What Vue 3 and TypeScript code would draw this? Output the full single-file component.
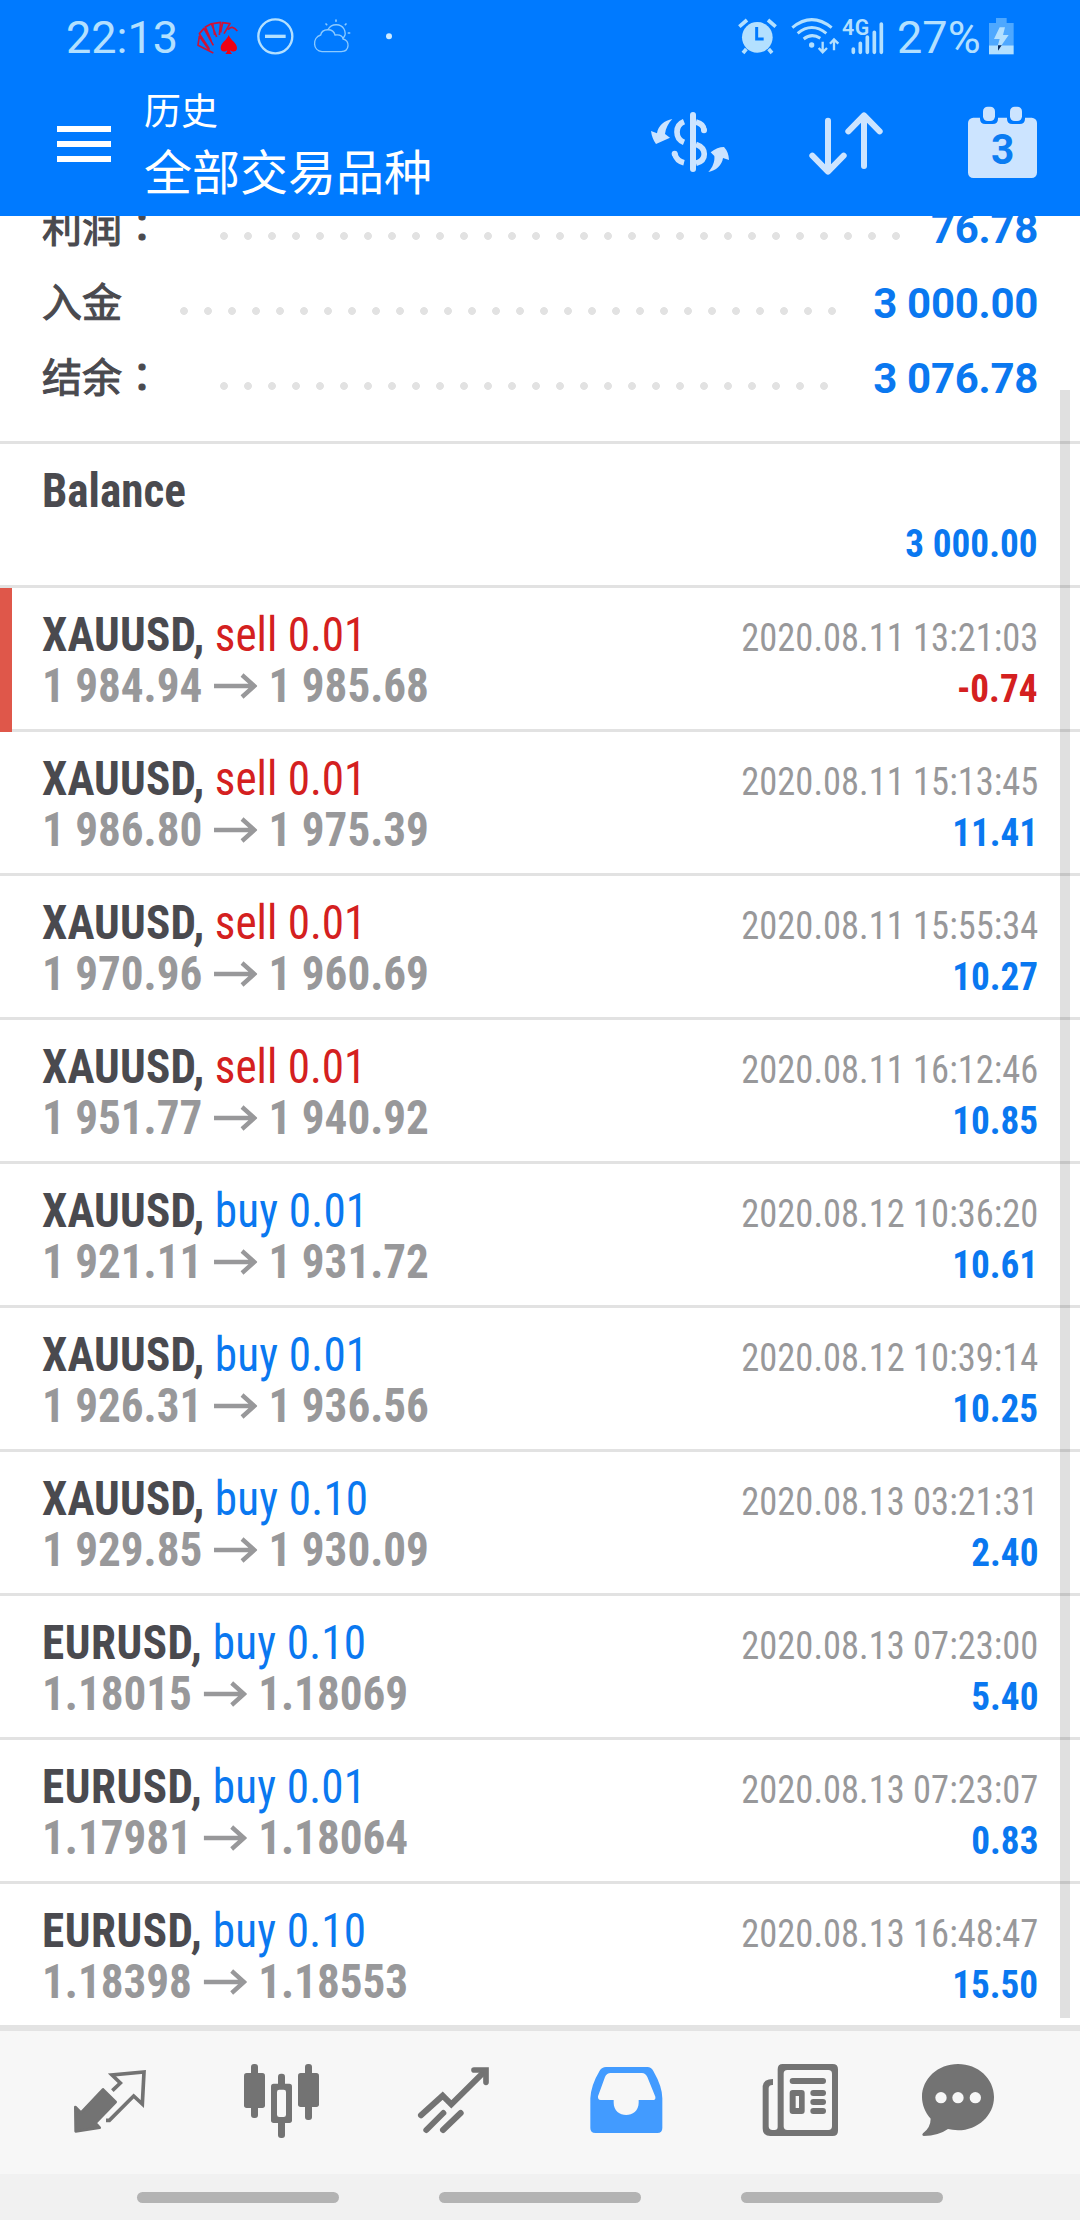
<script setup lang="ts">
interface SummaryLine { label: string; colon: boolean; dots: number; start: number; value: string }
interface Deal {
  symbol: string
  side: 'buy' | 'sell'
  volume: string
  open: string
  close: string
  time: string
  profit: string
}

const summary: SummaryLine[] = [
  { label: '利润', colon: true, dots: 29, start: 170, value: '76.78' },
  { label: '入金', colon: false, dots: 28, start: 130, value: '3 000.00' },
  { label: '结余', colon: true, dots: 26, start: 170, value: '3 076.78' },
]

const deals: Deal[] = [
  { symbol: 'XAUUSD', side: 'sell', volume: '0.01', open: '1 984.94', close: '1 985.68', time: '2020.08.11 13:21:03', profit: '-0.74' },
  { symbol: 'XAUUSD', side: 'sell', volume: '0.01', open: '1 986.80', close: '1 975.39', time: '2020.08.11 15:13:45', profit: '11.41' },
  { symbol: 'XAUUSD', side: 'sell', volume: '0.01', open: '1 970.96', close: '1 960.69', time: '2020.08.11 15:55:34', profit: '10.27' },
  { symbol: 'XAUUSD', side: 'sell', volume: '0.01', open: '1 951.77', close: '1 940.92', time: '2020.08.11 16:12:46', profit: '10.85' },
  { symbol: 'XAUUSD', side: 'buy', volume: '0.01', open: '1 921.11', close: '1 931.72', time: '2020.08.12 10:36:20', profit: '10.61' },
  { symbol: 'XAUUSD', side: 'buy', volume: '0.01', open: '1 926.31', close: '1 936.56', time: '2020.08.12 10:39:14', profit: '10.25' },
  { symbol: 'XAUUSD', side: 'buy', volume: '0.10', open: '1 929.85', close: '1 930.09', time: '2020.08.13 03:21:31', profit: '2.40' },
  { symbol: 'EURUSD', side: 'buy', volume: '0.10', open: '1.18015', close: '1.18069', time: '2020.08.13 07:23:00', profit: '5.40' },
  { symbol: 'EURUSD', side: 'buy', volume: '0.01', open: '1.17981', close: '1.18064', time: '2020.08.13 07:23:07', profit: '0.83' },
  { symbol: 'EURUSD', side: 'buy', volume: '0.10', open: '1.18398', close: '1.18553', time: '2020.08.13 16:48:47', profit: '15.50' },
]
</script>

<template>
  <div class="screen">
    <header class="top">
      <div class="status">
        <span class="clock">22:13</span>
        <svg class="status-left" viewBox="585 50 600 120" width="200" height="40" fill="none">
          <g stroke="#cc1238" stroke-width="5" stroke-linejoin="round">
            <path d="M640 158 L594 135 L598 108 L628 150 M628 146 L598 100 L612 84 L640 135 M634 122 L616 80 L634 70 L650 110 M644 104 L638 70 L662 66 L658 104 M662 96 L668 67 L690 70 L672 100 M684 88 Q696 72 712 92" />
          </g>
          <path fill="#f00014" d="M686 104 C692 120 711 128 711 143 C711 155 697 157 690 149 Q691 157 696 161 H676 Q681 157 682 149 C675 157 662 155 662 143 C662 128 680 120 686 104Z" />
          <circle cx="826" cy="108" r="51" stroke="#b3e0ff" stroke-width="7" />
          <path stroke="#b3e0ff" stroke-width="10" d="M795 108 H857" />
          <g stroke="#8ccaff" stroke-width="4" stroke-linecap="round">
            <path d="M966 154 C938 152 936 112 962 104 C966 84 1000 82 1005 104 C1022 102 1028 108 1029 116 C1050 120 1050 152 1024 154 Z" />
            <path d="M985 86 C994 70 1022 68 1032 86 C1038 97 1036 106 1030 113" />
            <path stroke-width="5" d="M1008 59 V63 M978 71 l2 2 M1038 71 l-2 2 M1045 98 h4" />
          </g>
          <circle cx="1167" cy="108" r="9" fill="#cdeaff" />
        </svg>
        <span class="grow" />
        <svg class="status-right" viewBox="290 50 442 120" width="147.33" height="40" fill="none">
          <g stroke="#b3e0ff">
            <path stroke-width="11" d="M297 79 L320 59 M406 79 L383 59 M318 146 L308 158 M385 146 L395 158" />
            <circle cx="351" cy="111" r="46" fill="#b3e0ff" stroke="none" />
            <path stroke="#007aff" stroke-width="9" d="M349 80 V116 H370" />
            <path stroke-width="9" d="M456 82 Q514 34 574 82 M472 99 Q514 64 558 99 M490 116 Q514 97 540 114" />
            <circle cx="514" cy="134" r="8" fill="#b3e0ff" stroke="none" />
            <path stroke-width="7" d="M547 124 V154 M535 143 L547 156 L560 143 M581 150 V118 M569 130 L581 117 L594 130" />
            <path stroke-width="11" stroke-linecap="round" d="M639 146 V156 M660 129 V156 M681 110 V156 M702 96 V156 M723 71 V156" />
          </g>
          <text x="605" y="104" font-family="Roboto" font-weight="600" font-size="64" fill="#b3e0ff" textLength="82">4G</text>
        </svg>
        <span class="percent">27%</span>
        <svg class="battery" viewBox="1046 50 74 114" width="24.67" height="38">
          <path fill="#4ea8ff" d="M1067 53 h32 v15 h21 v67 h-74 v-67 h21z" />
          <path fill="#b3e0ff" d="M1046 135 h74 v27 h-74z" />
          <path fill="#b3e0ff" d="M1078 81 H1094 L1088 104 H1105 L1082 137 H1072 L1078 116 H1061Z" />
          <path fill="#0a2a5e" d="M1073 135 H1084 L1073 151Z" />
        </svg>
      </div>
      <div class="appbar">
        <div class="burger"><i /><i /><i /></div>
        <div class="titles">
          <div class="subtitle">历史</div>
          <div class="title">全部交易品种</div>
        </div>
        <div class="actions">
          <svg viewBox="30 318 240 219" width="80" height="73" fill="none" stroke="#cce4ff">
            <path stroke-width="18" stroke-linecap="round" d="M159 345 V507" />
            <path stroke-width="17" d="M132 365 C104 376 104 416 132 427" />
            <path stroke-width="17" d="M168 366 C184 370 192 378 192 391 M168 433 C200 444 202 480 168 490 M104 461 C108 476 116 484 132 488" />
            <g fill="#cce4ff" stroke="none">
              <circle cx="192" cy="391" r="9" />
              <circle cx="104" cy="461" r="9" />
              <path d="M97 357 C74 361 54 376 51 400 L33 393 Q36 416 48 432 L90 413 L75 402 C77 385 85 370 97 357Z" />
              <path d="M205 516 C228 512 246 496 249 474 L267 480 Q266 456 252 441 Q232 441 212 457 L223 468 C225 485 218 502 205 516Z" />
            </g>
          </svg>
          <svg viewBox="504 318 228 219" width="76" height="73" fill="none" stroke="#cce4ff" stroke-width="18" stroke-linecap="round" stroke-linejoin="round">
            <path d="M564 362 V514 M517 467 L564 515 L611 467 M672 498 V348 M625 394 L672 346 L719 394" />
          </svg>
          <svg viewBox="984 318 207 219" width="69" height="73">
            <rect x="984" y="353" width="207" height="181" rx="16" fill="#cce4ff" />
            <path fill="#007aff" d="M1020 350 H1074 V356 Q1074 372 1058 372 H1036 Q1020 372 1020 356Z M1101 350 H1155 V356 Q1155 372 1139 372 H1117 Q1101 372 1101 356Z" />
            <rect x="1029" y="320" width="36" height="43" rx="14" fill="#cce4ff" />
            <rect x="1110" y="320" width="36" height="43" rx="14" fill="#cce4ff" />
            <text x="1088" y="493" text-anchor="middle" font-family="Roboto" font-weight="700" font-size="127" textLength="70" lengthAdjust="spacingAndGlyphs" fill="#0a7cf2">3</text>
          </svg>
        </div>
      </div>
    </header>

    <main class="content">
      <section class="summary">
        <div v-for="s in summary" :key="s.label" class="sum-row">
          <span class="sum-label" :style="{ width: s.start + 'px' }">{{ s.label }}<span v-if="s.colon" class="colon">：</span></span>
          <span class="sum-dots" :style="{ width: s.dots * 24 + 'px' }" />
          <span class="sum-value">{{ s.value }}</span>
        </div>
      </section>

      <article class="row">
        <div class="line"><span class="head"><b class="symbol">Balance</b></span></div>
        <div class="line end"><span class="profit">3 000.00</span></div>
      </article>
      <article v-for="d in deals" :key="d.time" class="row" :class="{ loss: d.profit.startsWith('-') }">
        <div class="line">
          <span class="head"><b class="symbol" :class="d.symbol.toLowerCase()">{{ d.symbol }},</b> <span :class="d.side">{{ d.side }} {{ d.volume }}</span></span>
          <span class="time">{{ d.time }}</span>
        </div>
        <div class="line">
          <span class="prices">{{ d.open }}<svg class="arrow" viewBox="0 0 44 26" width="46" height="26" preserveAspectRatio="none" fill="none" stroke="#98989a" stroke-width="4.4"><path d="M0 13 H41 M28.5 2 L41 13 L28.5 24" /></svg>{{ d.close }}</span>
          <span class="profit">{{ d.profit }}</span>
        </div>
      </article>
      <div class="scrollbar" />
    </main>

    <nav class="tabs">
      <svg viewBox="-150 -57 540 429" fill="#737373">
        <path stroke="#737373" stroke-width="8" stroke-linejoin="round" d="M159 118 L197 156 L136 219 L149 233 L77 244 L76 171 L93 188Z" />
        <path fill="none" stroke="#737373" stroke-width="11" stroke-linejoin="miter" d="M187 122 L211 99 L186 75 L282 66 L277 162 L251 138 L178 211 H168" />
      </svg>
      <svg viewBox="390 -57 540 429" fill="#737373">
        <rect x="603" y="42" width="21" height="162" rx="9" />
        <rect x="582" y="69" width="63" height="105" rx="8" />
        <rect x="684" y="71" width="21" height="193" rx="9" />
        <rect x="663" y="101" width="63" height="118" rx="8" />
        <rect x="681" y="119" width="27" height="82" rx="7" fill="#f7f7f7" />
        <rect x="765" y="42" width="21" height="168" rx="9" />
        <rect x="744" y="69" width="63" height="102" rx="8" />
      </svg>
      <svg viewBox="930 -57 540 429" fill="none" stroke="#737373" stroke-width="18" stroke-linecap="round">
        <path d="M1113 196 L1178 137 L1204 163 L1300 68" />
        <path stroke-width="17" d="M1272 60 H1308 V97" />
        <path d="M1129 240 L1180 189 M1179 240 L1232 189" />
      </svg>
      <svg viewBox="-90 -57 540 429">
        <path fill="#429bff" fill-rule="evenodd" d="M108 51 H232 Q244 51 250 63 Q277 110 277 145 V234 Q277 249 262 249 H76 Q61 249 61 234 V145 Q63 105 89 62 Q96 51 108 51Z M122 69 Q110 69 105 81 L84 139 Q83 150 92 150 H131 V158 C131 207 206 207 206 158 V150 H248 Q258 150 256 140 L232 81 Q226 69 216 69Z" />
      </svg>
      <svg viewBox="450 -57 540 429" fill="#737373">
        <path fill-rule="evenodd" d="M638 42 H788 Q804 42 804 58 V242 Q804 258 788 258 H601 Q578 258 578 235 V109 Q580 87 609 87 V105 Q597 104 596 114 V229 Q596 240 608 240 H614 Q623 240 623 231 V58 Q623 42 638 42Z M652 60 Q641 60 641 71 V229 Q641 240 652 240 H775 Q786 240 786 229 V71 Q786 60 775 60Z" />
        <rect x="659" y="84" width="109" height="18" rx="9" />
        <path fill-rule="evenodd" d="M668 120 H695 Q704 120 704 129 V183 Q704 192 695 192 H668 Q659 192 659 183 V129 Q659 120 668 120Z M677 138 V174 H687 V138Z" />
        <rect x="721" y="120" width="47" height="18" rx="9" />
        <rect x="721" y="147" width="47" height="18" rx="9" />
        <rect x="721" y="174" width="47" height="18" rx="9" />
      </svg>
      <svg viewBox="990 -57 540 429" fill="#737373">
        <path d="M1164 42 C1224 42 1272 86 1272 141 C1272 196 1224 241 1164 241 Q1146 240 1134 237 Q1106 257 1061 258 Q1054 256 1059 250 Q1082 232 1082 206 C1065 187 1056 163 1056 141 C1056 86 1104 42 1164 42Z" />
        <g fill="#f7f7f7"><circle cx="1113" cy="143" r="17" /><circle cx="1164" cy="143" r="17" /><circle cx="1216" cy="143" r="17" /></g>
      </svg>
    </nav>
    <footer class="system"><i /><i /><i /></footer>
  </div>
</template>

<style>
body { margin: 0; background: #fff; }
</style>

<style scoped>
.screen {
  width: 1080px;
  height: 2220px;
  overflow: hidden;
  display: flex;
  flex-direction: column;
  background: #fff;
  font-family: Roboto, "Noto Sans CJK SC", sans-serif;
}
svg { display: block; flex: none; }
.top { flex: none; height: 216px; background: #007aff; }
.status { height: 72px; display: flex; align-items: flex-start; padding-left: 66px; }
.clock, .percent { font-size: 45px; line-height: 75px; color: #b3e0ff; white-space: nowrap; }
.clock { width: 129px; }
.status-left, .status-right, .battery { margin-top: 16.67px; }
.grow { flex: 1; }
.percent { margin-left: 12.5px; width: 92px; }
.battery { margin-right: 66.3px; }
.appbar { display: flex; align-items: flex-start; padding: 11px 43px 0 57px; }
.burger { width: 54px; margin-top: 43px; display: flex; flex-direction: column; gap: 9px; }
.burger i { height: 6px; background: #fff; }
.titles { margin-left: 33px; flex: 1; color: #fff; font-family: "Noto Sans CJK SC", sans-serif; }
.subtitle { font-size: 37px; line-height: 50px; padding-top: 1px; }
.title { font-size: 48px; line-height: 72px; margin-top: -1px; }
.actions { display: flex; margin-top: 23px; }
.actions svg:nth-child(2) { margin-left: 78px; }
.actions svg:nth-child(3) { margin-left: 84px; }

.content { flex: none; height: 1809px; position: relative; overflow: hidden; }
.summary { margin-top: -17px; padding: 0 42px 17px; border-bottom: 3px solid #e2e2e2; }
.sum-row { height: 75px; display: flex; align-items: flex-start; }
.sum-label {
  flex: none;
  font: 400 40px/53px "Noto Sans CJK SC", sans-serif;
  -webkit-text-stroke: 1.1px #4a4a4f;
  color: #4a4a4f;
  white-space: nowrap;
}
.colon { font-family: "Noto Sans CJK TC", sans-serif; }
.sum-dots { height: 8px; margin-top: 33px; background: radial-gradient(circle, #e2e2e2 3.5px, transparent 4.3px) 0 0 / 24px 8px; flex: none; }
.sum-value { margin-left: auto; font-weight: 700; font-size: 42px; line-height: 59px; letter-spacing: -0.3px; color: #0a78f0; white-space: nowrap; }

.row { position: relative; box-sizing: border-box; height: 144px; padding: 21px 42px 0; border-bottom: 3px solid #e2e2e2; font-family: "Roboto Condensed", Roboto, sans-serif; }
.row.loss::before { content: ""; position: absolute; left: 0; top: 0; width: 12px; height: 144px; background: #df574a; }
.line { height: 51px; line-height: 51px; display: flex; justify-content: space-between; align-items: baseline; white-space: nowrap; }
.line.end { justify-content: flex-end; padding-top: 3px; }
.head, .prices { font-size: 48px; transform: scaleX(0.94); transform-origin: 0 50%; }
.symbol { font-weight: 700; color: #4a4a4f; }
.xauusd { letter-spacing: 0.15px; }
.eurusd { letter-spacing: 0.55px; }
.sell { color: #d42020; }
.buy { color: #0a78f0; letter-spacing: 0.2px; }
.time { font-size: 39px; color: #98989a; transform: scaleX(0.936); transform-origin: 100% 50%; }
.prices { font-weight: 700; color: #98989a; display: flex; align-items: baseline; }
.arrow { margin: 0 12px 0 12.5px; align-self: center; }
.profit { font-size: 39px; font-weight: 700; color: #0a78f0; transform: scaleX(0.954); transform-origin: 100% 50%; }
.loss .profit { color: #d42020; }
.scrollbar { position: absolute; left: 1060px; top: 174px; width: 10px; height: 1628px; background: rgba(0, 0, 0, 0.12); }

.tabs { flex: none; height: 143px; border-top: 6px solid #e3e3e3; background: #f7f7f7; display: flex; }
.tabs svg { width: 180px; height: 143px; }
.system { flex: 1; background: #f1f1f1; display: flex; justify-content: center; gap: 100px; padding-top: 18px; }
.system i { width: 202px; height: 11px; border-radius: 6px; background: #b3b3b3; }
</style>
